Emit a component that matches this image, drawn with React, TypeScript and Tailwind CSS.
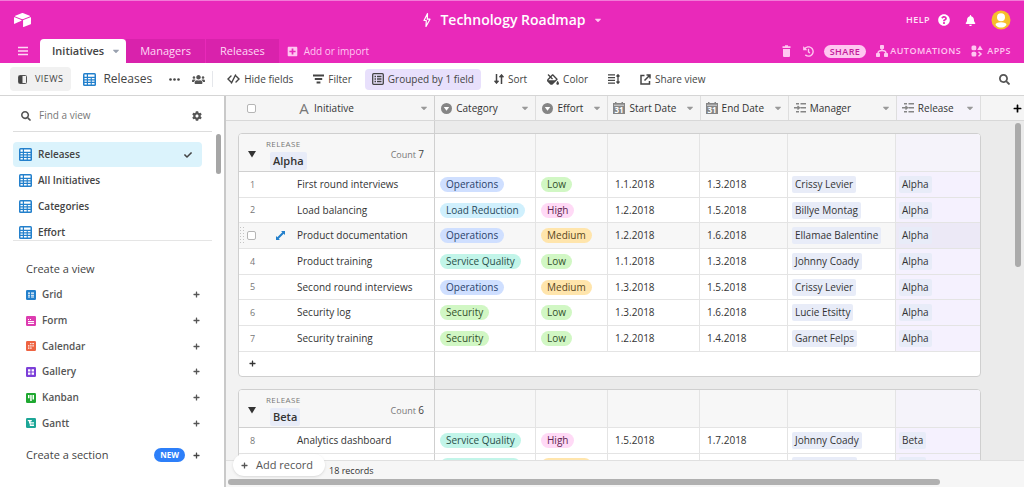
import React, { useState } from "react";
import { FaBell, FaCaretDown, FaCheck, FaCog, FaFillDrip, FaHistory, FaPlus, FaPlusSquare, FaQuestionCircle, FaSearch, FaUsers } from "react-icons/fa";

type RecordRow = {
  id: number;
  name: string;
  category: string;
  effort: string;
  start: string;
  end: string;
  manager: string;
  release: string;
};

const groups: { name: string; count: number; rows: RecordRow[] }[] = [
  {
    name: "Alpha",
    count: 7,
    rows: [
      { id: 1, name: "First round interviews", category: "Operations", effort: "Low", start: "1.1.2018", end: "1.3.2018", manager: "Crissy Levier", release: "Alpha" },
      { id: 2, name: "Load balancing", category: "Load Reduction", effort: "High", start: "1.2.2018", end: "1.5.2018", manager: "Billye Montag", release: "Alpha" },
      { id: 3, name: "Product documentation", category: "Operations", effort: "Medium", start: "1.2.2018", end: "1.6.2018", manager: "Ellamae Balentine", release: "Alpha" },
      { id: 4, name: "Product training", category: "Service Quality", effort: "Low", start: "1.1.2018", end: "1.3.2018", manager: "Johnny Coady", release: "Alpha" },
      { id: 5, name: "Second round interviews", category: "Operations", effort: "Medium", start: "1.3.2018", end: "1.5.2018", manager: "Crissy Levier", release: "Alpha" },
      { id: 6, name: "Security log", category: "Security", effort: "Low", start: "1.3.2018", end: "1.6.2018", manager: "Lucie Etsitty", release: "Alpha" },
      { id: 7, name: "Security training", category: "Security", effort: "Low", start: "1.2.2018", end: "1.4.2018", manager: "Garnet Felps", release: "Alpha" },
    ],
  },
  {
    name: "Beta",
    count: 6,
    rows: [
      { id: 8, name: "Analytics dashboard", category: "Service Quality", effort: "High", start: "1.5.2018", end: "1.7.2018", manager: "Johnny Coady", release: "Beta" },
      { id: 9, name: "", category: "Service Quality", effort: "Medium", start: "", end: "", manager: "Garnet Felps", release: "Beta" },
    ],
  },
];

const pillColors: Record<string, string> = {
  Operations: "bg-[#cfdfff] text-[#2b3f6b]",
  "Load Reduction": "bg-[#d0f0fd] text-[#2a4a5c]",
  "Service Quality": "bg-[#c2f5e9] text-[#2a4f4a]",
  Security: "bg-[#d1f7c4] text-[#33502b]",
  Low: "bg-[#d1f7c4] text-[#33502b]",
  High: "bg-[#ffdaf6] text-[#5c2450]",
  Medium: "bg-[#ffe5ac] text-[#5a4520]",
};

const views = ["Releases", "All Initiatives", "Categories", "Effort"];

function Logo() {
  return (
    <svg viewBox="0 0 200 170" className="h-4 w-[19px]" fill="#fff" aria-hidden="true">
      <path d="M90 12 23 39c-4 2-4 7 0 9l68 27c6 2 12 2 18 0l68-27c4-2 4-7 0-9L110 12c-6-3-13-3-20 0Z" />
      <path d="M106 89v67c0 3 3 5 6 4l75-29c2-1 3-3 3-5V59c0-3-3-5-6-4l-75 29c-2 1-3 3-3 5Z" />
      <path d="m88 92-22 11-2 1-47 22c-3 2-7 0-7-4V60c0-1 1-2 2-3 2-1 3-1 5 0l71 28c4 2 4 5 0 7Z" />
    </svg>
  );
}

function GridIcon() {
  return (
    <svg viewBox="0 0 13 13" className="h-[13px] w-[13px] shrink-0" aria-hidden="true">
      <rect width="13" height="13" rx="1.5" fill="#2380cc" />
      <path fill="#fff" d="M1.5 1.5h2.3v2.2H1.5zM5 1.5h6.5v2.2H5zM1.5 5h2.3v1.3H1.5zM5 5h2.7v1.3H5zM8.8 5h2.7v1.3H8.8zM1.5 7.5h2.3v1.3H1.5zM5 7.5h2.7v1.3H5zM8.8 7.5h2.7v1.3H8.8zM1.5 10h2.3v1.5H1.5zM5 10h2.7v1.5H5zM8.8 10h2.7v1.5H8.8z" />
    </svg>
  );
}

const createViews = [
  { name: "Grid", fill: "#2380cc", d: "M2 2.500h2v1.300H2zM5 2.500h3v1.300H5zM2 4.700h2v1H2zM5 4.700h3v1H5zM2 6.600h2v1H2zM5 6.600h3v1H5z" },
  { name: "Form", fill: "#dd3cb0", d: "M2 3h1v1H2zM4 3h1v1H4zM2 5h6v1H2zM2 6.7h6V8H2z" },
  { name: "Calendar", fill: "#ee6342", d: "M4.2 2h1.2v1.2H4.2zM6.4 2h1.4v1.2H6.4zM2 4.2h1.4v1.3H2zM4.2 4.2h1.4v1.3H4.2zM6.4 4.2h1.4v1.3H6.4zM2 6.4h1.4v1.3H2zM4.2 6.4h1.4v1.3H4.2z" },
  { name: "Gallery", fill: "#7c3fd8", d: "M2 2.2h2.4v2.2H2zM5.6 2.2H8v2.2H5.6zM2 5.6h2.4v2.2H2zM5.6 5.6H8v2.2H5.6z" },
  { name: "Kanban", fill: "#1fa831", d: "M2 2h1.5v3.3H2zM4.2 2h1.5v6H4.2zM6.5 2H8v4.5H6.5z" },
  { name: "Gantt", fill: "#1da697", d: "M1.8 2h4v1.2H4.6v1H8v1.3H4.6v1H8V8H3.8V5.5H3V3.2H1.8z" },
];

function DatabaseTab({ name }: { name: string }) {
  return (
    <button type="button" className="h-6 bg-[#d922ac] px-3.5 text-[11px] font-medium text-[#ffd9f6]">
      {name}
    </button>
  );
}

function Header() {
  return (
    <header className="relative shrink-0 border-t border-[#f27bd8] bg-[#e929ba] text-white">
      <div className="flex h-[38px] items-center justify-between px-[13px]">
        <a href="#" aria-label="Home"><Logo /></a>
        <div className="flex items-center gap-[15px]">
          <button type="button" className="flex items-center gap-2 text-[9px] font-semibold tracking-wider text-[#ffe3f8]">
            HELP <FaQuestionCircle className="h-3 w-3 text-white" />
          </button>
          <button type="button" aria-label="Notifications"><FaBell className="h-[11px] w-[11px]" /></button>
          <button type="button" aria-label="Account">
            <svg viewBox="0 0 20 20" className="h-5 w-5" aria-hidden="true">
              <circle cx="10" cy="10" r="9.5" fill="#f6be2c" />
              <circle cx="10" cy="7.2" r="4" fill="#fff" />
              <path d="M4.5 15c0-2 2-2.8 5.5-2.8s5.5.8 5.5 2.8c-1.2 1.7-3.3 2.6-5.5 2.6S5.7 16.7 4.5 15Z" fill="#fff" />
            </svg>
          </button>
        </div>
      </div>
      <div className="absolute inset-x-0 top-0 mx-auto flex h-[38px] w-fit items-center gap-2">
        <svg viewBox="0 0 10 16" className="h-4 w-2.5" fill="none" stroke="#fff" strokeWidth="1.2" strokeLinejoin="round" aria-hidden="true">
          <path d="M5.5 1.5 2 8.5h2.300L4 14.500l4-7.300H5.300z" />
        </svg>
        <h1 className="text-sm font-semibold">Technology Roadmap</h1>
        <FaCaretDown className="h-2.5 w-2 text-[#ffc6f1]" />
      </div>
      <div className="flex h-6 items-center justify-between pr-[13px] pl-[18px]">
        <nav className="flex items-center">
          <button type="button" aria-label="Menu" className="mr-3">
            <svg viewBox="0 0 10 10" className="h-2.5 w-2.5" stroke="#ffd9f6" strokeWidth="1.5" aria-hidden="true">
              <path d="M0 1.500h10M0 5h10M0 8.500h10" />
            </svg>
          </button>
          <button type="button" className="flex h-6 items-center gap-2 rounded-t-sm bg-white pr-1.5 pl-3 text-[11px] font-semibold text-[#444]">
            Initiatives <FaCaretDown className="h-2.5 w-2 text-gray-400" />
          </button>
          <div className="flex gap-px">
            <DatabaseTab name="Managers" />
            <DatabaseTab name="Releases" />
          </div>
          <button type="button" className="ml-2 flex items-center gap-1.5 text-[10px] text-[#ffc6f1]">
            <FaPlusSquare className="h-[11px] w-[11px]" /> Add or import
          </button>
        </nav>
        <div className="flex items-center text-[9px] font-semibold tracking-wider text-[#ffc6f1]">
          <button type="button" aria-label="Trash" className="mr-3">
            <svg viewBox="0 0 9 12" className="h-3 w-[9px]" fill="currentColor" aria-hidden="true">
              <path d="M3 .3h3v.9h2.500v1.800h-8V1.200H3zM1 4h7v7a1 1 0 0 1-1 1H2a1 1 0 0 1-1-1z" />
            </svg>
          </button>
          <button type="button" aria-label="History" className="mr-2.5"><FaHistory className="h-[11px] w-[11px]" /></button>
          <button type="button" className="mr-2.5 h-[13px] rounded-full bg-[#ffc6f1] px-1.5 leading-[13px] text-[#c21d9a]">SHARE</button>
          <button type="button" className="mr-2.5 flex items-center gap-0.5">
            <svg viewBox="0 0 12 12" className="h-3 w-3" fill="currentColor" aria-hidden="true">
              <rect x="4" width="4" height="4" rx=".8" />
              <rect y="8" width="4" height="4" rx=".8" />
              <rect x="8" y="8" width="4" height="4" rx=".8" />
              <path d="M6 3v2.500M2 8.500C2 6.500 4 5.500 6 5.500s4 1 4 3" fill="none" stroke="currentColor" strokeWidth="1.4" />
            </svg>
            AUTOMATIONS
          </button>
          <button type="button" className="flex items-center gap-1">
            <svg viewBox="0 0 12 12" className="h-3 w-3" fill="currentColor" aria-hidden="true">
              <rect x=".5" y=".5" width="4.8" height="4.8" rx="1.5" />
              <path d="M9 .5 11.800 5H6.200z" />
              <rect x=".5" y="6.700" width="4.8" height="4.8" rx="1.5" />
              <path d="m7.500 6.800 2.500 2.200-2.500 2.200" fill="none" stroke="currentColor" strokeWidth="1.5" />
            </svg>
            APPS
          </button>
        </div>
      </div>
    </header>
  );
}

function ToolButton({ label, active, children }: { label?: string; active?: boolean; children: React.ReactNode }) {
  return (
    <button
      type="button"
      aria-label={label ? undefined : "Row height"}
      className={`flex h-[21px] items-center gap-1 rounded-sm px-[7px] ${active ? "bg-[#e8e0fc]" : ""}`}
    >
      {children}
      {label}
    </button>
  );
}

function Toolbar() {
  return (
    <div className="flex h-8 shrink-0 items-center bg-white pr-3.5 pl-2.5 text-[10px] font-medium whitespace-nowrap text-[#444]">
      <button type="button" className="flex h-6 items-center gap-2 rounded-sm bg-[#f1f1f1] px-2 text-[9px] tracking-wider">
        <svg viewBox="0 0 9 9" className="h-[9px] w-[9px]" aria-hidden="true">
          <rect x=".5" y=".5" width="8" height="8" rx="1" fill="none" stroke="#555" />
          <path d="M1 1h3.500v7H1z" fill="#444" />
        </svg>
        VIEWS
      </button>
      <button type="button" className="ml-3 flex items-center gap-[7px] text-xs font-normal">
        <GridIcon /> Releases
      </button>
      <button type="button" aria-label="More options" className="ml-[17px]">
        <svg viewBox="0 0 11 3" className="h-[3px] w-[11px]" fill="#444" aria-hidden="true">
          <circle cx="1.5" cy="1.5" r="1.3" /><circle cx="5.5" cy="1.5" r="1.3" /><circle cx="9.5" cy="1.5" r="1.3" />
        </svg>
      </button>
      <button type="button" aria-label="Collaborators" className="ml-3"><FaUsers className="h-[13px] w-[13px] text-[#555]" /></button>
      <div className="mx-[7px] h-4 w-px bg-gray-200" />
      <div className="flex items-center gap-1.5">
        <ToolButton label="Hide fields">
          <svg viewBox="0 0 13 10" className="h-2.5 w-[13px]" fill="none" stroke="#444" strokeWidth="1.4" strokeLinecap="round" aria-hidden="true">
            <path d="M4 2 1 5l3 3M9 2l3 3-3 3M8.500 1l-4 8" />
          </svg>
        </ToolButton>
        <ToolButton label="Filter">
          <svg viewBox="0 0 11 10" className="h-2.5 w-[11px]" fill="#444" aria-hidden="true">
            <path d="M0 .5h11v2H0zM1.800 4h7.400v2H1.800zM3.600 7.500h3.800v2H3.600z" />
          </svg>
        </ToolButton>
        <ToolButton label="Grouped by 1 field" active>
          <svg viewBox="0 0 12 12" className="h-3 w-3" fill="none" stroke="#444" strokeWidth="1.3" aria-hidden="true">
            <rect x=".7" y=".7" width="10.6" height="10.6" rx="1" />
            <path d="M2.500 3.500H4M5 3.500h4.500M2.500 6H4M5 6h4.500M2.500 8.500H4M5 8.500h4.500" />
          </svg>
        </ToolButton>
        <ToolButton label="Sort">
          <svg viewBox="0 0 10 10" className="h-2.5 w-2.5" fill="none" stroke="#444" strokeWidth="1.5" aria-hidden="true">
            <path d="M2.500 0v9M.5 6.800l2 2.200 2-2.200M7.500 10V1M5.500 3.200l2-2.200 2 2.200" />
          </svg>
        </ToolButton>
        <ToolButton label="Color"><FaFillDrip className="h-[11px] w-3" /></ToolButton>
        <ToolButton>
          <svg viewBox="0 0 12 10" className="h-2.5 w-3" fill="none" stroke="#444" strokeWidth="1.3" aria-hidden="true">
            <path d="M0 .8h7M0 3.600h7M0 6.400h7M0 9.200h7M10 1v8M8.500 2.500 10 .8l1.500 1.700M8.500 7.500 10 9.200l1.500-1.700" />
          </svg>
        </ToolButton>
        <ToolButton label="Share view">
          <svg viewBox="0 0 11 11" className="h-[11px] w-[11px]" fill="none" stroke="#444" strokeWidth="1.5" aria-hidden="true">
            <path d="M4.500 1.500H1v8.500h8.500V7M4.500 6.500l5-5M6.500 1h3.500v3.500" />
          </svg>
        </ToolButton>
      </div>
      <button type="button" aria-label="Search" className="ml-auto"><FaSearch className="h-[11px] w-[11px] text-[#555]" /></button>
    </div>
  );
}

function Sidebar() {
  const [active, setActive] = useState("Releases");

  return (
    <aside className="relative w-[226px] shrink-0 border-r-2 border-[#c9c9c9] bg-white text-[10px] text-[#444]">
      <div className="mr-3 ml-[13px] flex h-9 items-center border-b border-[#ddd] pt-1 pr-2.5 pl-2">
        <FaSearch className="h-2.5 w-2.5 shrink-0 text-[#555]" />
        <input type="text" aria-label="Find a view" placeholder="Find a view" className="ml-2 min-w-0 flex-1 bg-transparent outline-none placeholder:text-[#777]" />
        <button type="button" aria-label="View settings"><FaCog className="h-2.5 w-2.5 text-[#555]" /></button>
      </div>

      <ul className="mr-3 ml-[13px] flex h-[109px] flex-col gap-px overflow-hidden border-b border-[#e5e5e5] pt-2.5 pr-2.5 font-semibold">
        {views.map((view) => (
          <li key={view}>
            <button
              type="button"
              onClick={() => setActive(view)}
              className={`flex h-[25px] w-full items-center gap-1.5 rounded-sm px-1.5 ${active === view ? "bg-[#dbf3fc]" : ""}`}
            >
              <GridIcon /> {view}
              {active === view && <FaCheck className="mr-1 ml-auto h-2 w-2" />}
            </button>
          </li>
        ))}
      </ul>
      <div className="absolute top-[38px] right-[3px] h-10 w-[5px] rounded-full bg-[#a6a6a6]" />

      <div className="pr-6 pl-[26px]">
        <h2 className="pt-[19px] pb-1 text-[11px] leading-[18px] font-medium">Create a view</h2>
        <ul className="flex h-[154px] flex-col">
          {createViews.map((view) => (
            <li key={view.name} className="min-h-0 flex-1">
              <button type="button" className="flex h-full w-full items-center gap-1.5 font-semibold text-[#555]">
                <svg viewBox="0 0 10 10" className="h-2.5 w-2.5" aria-hidden="true">
                  <rect width="10" height="10" rx="1.2" fill={view.fill} />
                  <path d={view.d} fill="#fff" />
                </svg>
                {view.name}
                <FaPlus className="ml-auto h-[7px] w-[7px]" />
              </button>
            </li>
          ))}
        </ul>
        <button type="button" className="mt-2 flex h-[22px] w-full items-center text-[11px] font-medium">
          Create a section
          <span className="mr-2 ml-auto rounded-full bg-[#2d7ff9] px-1.5 text-[8px] leading-[14px] font-bold text-white">NEW</span>
          <FaPlus className="h-[7px] w-[7px]" />
        </button>
      </div>
    </aside>
  );
}

function SelectIcon() {
  return (
    <svg viewBox="0 0 11 11" className="h-[11px] w-[11px]" aria-hidden="true">
      <circle cx="5.5" cy="5.5" r="5.5" fill="#858585" />
      <path d="M2.800 4h5.400L5.500 7.800z" fill="#fff" />
    </svg>
  );
}

function DateIcon() {
  return (
    <svg viewBox="0 0 12 12" className="h-3 w-3" aria-hidden="true">
      <path d="M0 1h2V0h1.500v1h5V0H10v1h2v11H0z" fill="#858585" />
      <path d="M1 3.200h10" stroke="#fff" strokeWidth=".7" />
      <text x="6" y="10.500" textAnchor="middle" fontSize="8" fontWeight="700" fill="#fff">31</text>
    </svg>
  );
}

function LinkIcon() {
  return (
    <svg viewBox="0 0 12 10" className="h-2.5 w-3" fill="none" stroke="#858585" strokeWidth="1.4" aria-hidden="true">
      <path d="M2 .8h3M6.500.8H12M0 4.800h5M6.500 4.800H12M2 8.800h3M6.500 8.800H12M3.500 3l2 1.800-2 1.800" />
    </svg>
  );
}

const columns = [
  { name: "Category", icon: <SelectIcon /> },
  { name: "Effort", icon: <SelectIcon /> },
  { name: "Start Date", icon: <DateIcon /> },
  { name: "End Date", icon: <DateIcon /> },
  { name: "Manager", icon: <LinkIcon /> },
  { name: "Release", icon: <LinkIcon /> },
];

function DataCols() {
  return (
    <>
      <col className="w-[142px]" />
      <col className="w-[101px]" />
      <col className="w-[72px]" />
      <col className="w-[92px]" />
      <col className="w-[88px]" />
      <col className="w-[108px]" />
      <col className="w-[84px]" />
    </>
  );
}

function Checkbox({ label }: { label: string }) {
  return (
    <input type="checkbox" aria-label={label} className="block h-[9px] w-[9px] appearance-none rounded-xs border border-[#b5b5b5] bg-white checked:bg-[#2d7ff9]" />
  );
}

function ColumnHeader({ name, icon }: { name: string; icon: React.ReactNode }) {
  return (
    <div className="flex items-center gap-1 pr-1.5 pl-[5px]">
      <span className="flex w-3 justify-center">{icon}</span>
      {name}
      <FaCaretDown className="ml-auto h-2.5 w-2 text-[#999]" />
    </div>
  );
}

function Pill({ value }: { value: string }) {
  return <span className={`block w-fit rounded-full px-1.5 leading-[15px] ${pillColors[value]}`}>{value}</span>;
}

function LinkChip({ value }: { value: string }) {
  return <span className="block w-fit rounded-xs bg-[#e8ecf8] px-[3px] leading-[17px]">{value}</span>;
}

function GroupCard({ group, height }: { group: (typeof groups)[number]; height: string }) {
  const [open, setOpen] = useState(true);

  return (
    <section className="w-[743px] shrink-0 overflow-hidden rounded border border-[#cfcfcf] bg-white">
      <table className={`w-full table-fixed border-separate border-spacing-0 ${open ? height : ""}`}>
        <colgroup>
          <col className="w-[54px]" />
          <DataCols />
        </colgroup>
        <thead>
          <tr className="h-[38px] bg-[#f7f7f7] text-left font-normal">
            <th colSpan={2} className="border-r border-b border-[#d0d0d0] p-0 font-normal">
              <div className="flex items-center pr-2.5 pl-[9px]">
                <button type="button" aria-label={`Toggle ${group.name}`} onClick={() => setOpen(!open)} className="w-[18px] pt-1">
                  <svg viewBox="0 0 8 7" className="h-[7px] w-2" aria-hidden="true"><path d="M0 0h8L4 6.500z" fill="#333" /></svg>
                </button>
                <div className="flex flex-col items-start">
                  <span className="text-[8px] leading-4 tracking-wider text-[#777]">RELEASE</span>
                  <span className="ml-1 rounded-xs bg-[#e8ecf8] px-[3px] text-[11px] leading-[18px] font-semibold text-[#333]">{group.name}</span>
                </div>
                <span className="ml-auto pt-1 text-[9px] text-[#777]">
                  Count <span className="text-[10px] text-[#444]">{group.count}</span>
                </span>
              </div>
            </th>
            {columns.map((column) => (
              <td key={column.name} className="border-r border-b border-[#e4e4e4] last:border-r-0 last:bg-[#f5f3fa]" />
            ))}
          </tr>
        </thead>
        {open && (
          <tbody>
            {group.rows.map((row) => (
              <tr key={row.id} className={`*:border-b *:border-[#e4e4e4] *:p-0 ${row.id === 3 ? "bg-[#f7f7f7]" : ""}`}>
                <td>
                  {row.id === 3 ? (
                    <div className="flex items-center">
                      <svg viewBox="0 0 6 17" className="h-[17px] w-1.5" aria-hidden="true">
                        <path d="M1.500 0v17M4.500 0v17" stroke="#c4c4c4" strokeDasharray="1 2" />
                      </svg>
                      <span className="ml-0.5"><Checkbox label="Select record 3" /></span>
                      <button type="button" aria-label="Expand record" className="ml-5">
                        <svg viewBox="0 0 9 9" className="h-[9px] w-[9px]" fill="#2380cc" aria-hidden="true">
                          <path d="M5 0h4v4L7.700 2.700 2.700 7.700 4 9H0V5l1.300 1.300 5-5z" />
                        </svg>
                      </button>
                    </div>
                  ) : (
                    <div className="w-[27px] text-center text-[9px] text-[#777]">{row.id}</div>
                  )}
                </td>
                <td className="border-r border-r-[#cfcfcf]!"><div className="h-[17px] pl-1 leading-[17px] whitespace-nowrap">{row.name}</div></td>
                <td className="border-r"><div className="pl-[5px]"><Pill value={row.category} /></div></td>
                <td className="border-r"><div className="pl-[5px]"><Pill value={row.effort} /></div></td>
                <td className="border-r"><div className="pl-[7px]">{row.start}</div></td>
                <td className="border-r"><div className="pl-[7px]">{row.end}</div></td>
                <td className="border-r"><div className="pl-1"><LinkChip value={row.manager} /></div></td>
                <td className={row.id === 3 ? "bg-[#ece9f6]" : "bg-[#f5f1fe]"}><div className="pl-[3px]"><LinkChip value={row.release} /></div></td>
              </tr>
            ))}
            {group.rows.length === group.count && (
              <tr>
                <td colSpan={2} className="border-r border-[#cfcfcf] p-0">
                  <button type="button" aria-label="Add record to group" className="flex h-[17px] w-[27px] items-center justify-center"><FaPlus className="h-[7px] w-[7px]" /></button>
                </td>
                <td colSpan={6} />
              </tr>
            )}
          </tbody>
        )}
      </table>
    </section>
  );
}

function Grid() {
  return (
    <main className="relative flex min-w-0 flex-1 flex-col text-[10px] text-[#333]">
      <div className="flex h-[25px] shrink-0 justify-between border-b border-[#d8d8d8] bg-[#f5f5f5]">
        <table className="h-6 w-[755px] table-fixed border-separate border-spacing-0">
          <colgroup>
            <col className="w-[67px]" />
            <DataCols />
          </colgroup>
          <thead>
            <tr className="text-left *:border-r *:border-[#dedede] *:p-0 *:font-normal">
              <th className="border-r-0!"><div className="pl-[21px]"><Checkbox label="Select all records" /></div></th>
              <th className="border-r-[#cfcfcf]!">
                <ColumnHeader name="Initiative" icon={<span className="text-[15px] leading-4 text-[#777]">A</span>} />
              </th>
              {columns.map((column) => (
                <th key={column.name} className="last:bg-[#f5f3fa]"><ColumnHeader {...column} /></th>
              ))}
            </tr>
          </thead>
        </table>
        <button type="button" aria-label="Add field" className="pr-0.5 text-black"><FaPlus className="h-[9px] w-[9px]" /></button>
      </div>

      <div className="flex min-h-0 flex-1 flex-col gap-3 overflow-hidden bg-[linear-gradient(to_right,#f2f2f2_208px,#cfcfcf_208px,#cfcfcf_209px,#ebebeb_209px)] pt-3 pl-3">
        <GroupCard group={groups[0]} height="h-[242px]" />
        <GroupCard group={groups[1]} height="h-[89px]" />
      </div>
      <div className="absolute top-[27px] right-[3px] h-36 w-1.5 rounded-full bg-[#ababab]" />

      <footer className="relative h-[27px] shrink-0 border-t border-[#e0e0e0] bg-[#f6f6f6]">
        <button type="button" className="absolute -top-[7px] left-[7px] flex h-[22px] items-center gap-2 rounded-full bg-white pr-3 pl-2 text-[11px] text-[#555] shadow-sm">
          <FaPlus className="h-[7px] w-[7px]" /> Add record
        </button>
        <p className="pt-0.5 pl-[103px] text-[9px] leading-4">18 records</p>
        <div className="absolute right-[84px] bottom-0.5 left-0.5 h-1.5 rounded-full bg-[#b0b0b0]" />
      </footer>
    </main>
  );
}

export default function App() {
  return (
    <div className="flex h-screen flex-col overflow-hidden bg-white font-['Open_Sans','Noto_Sans',sans-serif]">
      <Header />
      <Toolbar />
      <div className="flex min-h-0 flex-1 border-t border-[#d5d5d5]">
        <Sidebar />
        <Grid />
      </div>
    </div>
  );
}
